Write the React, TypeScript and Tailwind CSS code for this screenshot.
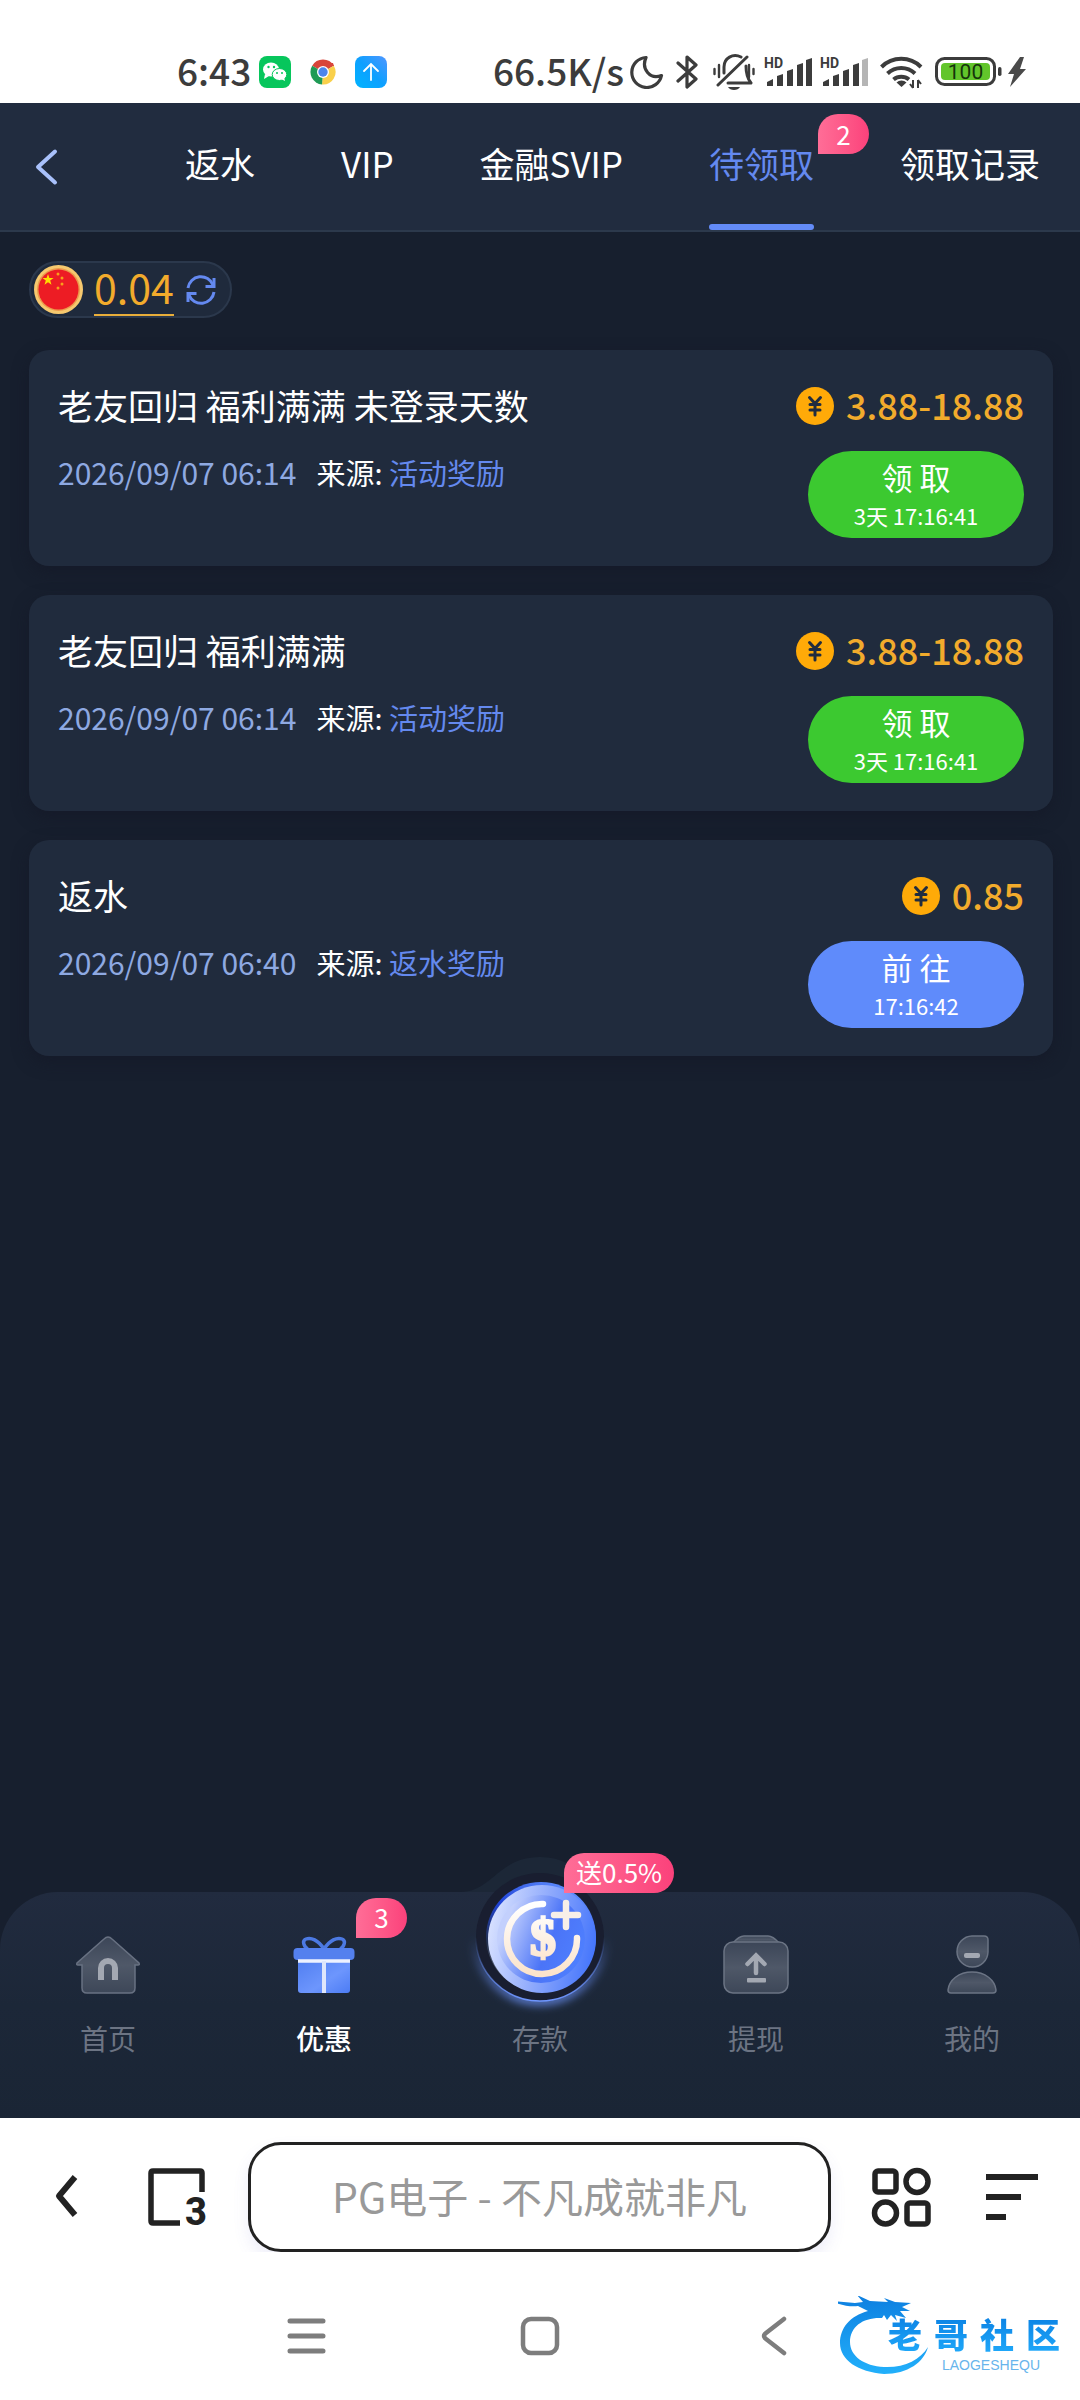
import React from "react";

interface Reward {
  title: string;
  date: string;
  source: string;
  amount: string;
  action: string;
  countdown: string;
  color: string;
}

const rewards: Reward[] = [
  {
    title: "老友回归 福利满满 未登录天数",
    date: "2026/09/07 06:14",
    source: "活动奖励",
    amount: "3.88-18.88",
    action: "领 取",
    countdown: "3天 17:16:41",
    color: "bg-[#3cc930]",
  },
  {
    title: "老友回归 福利满满",
    date: "2026/09/07 06:14",
    source: "活动奖励",
    amount: "3.88-18.88",
    action: "领 取",
    countdown: "3天 17:16:41",
    color: "bg-[#3cc930]",
  },
  {
    title: "返水",
    date: "2026/09/07 06:40",
    source: "返水奖励",
    amount: "0.85",
    action: "前 往",
    countdown: "17:16:42",
    color: "bg-[#5f8bfb]",
  },
];

const tabs = [
  { label: "返水" },
  { label: "VIP" },
  { label: "金融SVIP" },
  { label: "待领取", active: true, badge: "2" },
  { label: "领取记录" },
];

const Badge: React.FC<{ className: string; children: React.ReactNode }> = ({
  className,
  children,
}) => (
  <span
    className={`absolute flex h-10 items-center justify-center rounded-full rounded-bl-none bg-linear-to-r from-[#ff6d97] to-[#fb417b] pb-0.5 text-[26px] font-normal whitespace-nowrap text-white ${className}`}
  >
    {children}
  </span>
);

const SignalIcon: React.FC<{ weak?: boolean }> = ({ weak }) => (
  <svg width="48" height="44" viewBox="0 -7 48 44" fill="#3c3c3c">
    <text x="0" y="11" fontSize="14" fontWeight="700" fontFamily="Roboto, sans-serif">
      HD
    </text>
    <path d="M3 29v-4l6-3v7zM13 29V19l6-2v12zM23 29V14l6-2v17zM33 29V8l6-2v23z" />
    <path d="M42 29V3l6-2v28z" fill={weak ? "#b5b5b5" : "#3c3c3c"} />
  </svg>
);

const StatusBar = () => (
  <div className="flex h-[103px] items-center bg-white pt-[41px] pr-[53px] pl-[177px] text-[37px] leading-none font-medium whitespace-nowrap text-[#3c3c3c]">
    <span className="pb-1">6:43</span>
    <div className="flex items-center gap-4 pl-2">
      <svg width="32" height="32" viewBox="0 0 32 32">
        <rect width="32" height="32" rx="8" fill="#07c65c" />
        <ellipse cx="12" cy="13.500" rx="8" ry="7" fill="#fff" />
        <path d="M6 18l-1 5 5-3z" fill="#fff" />
        <circle cx="9.500" cy="11" r="1.200" fill="#07c65c" />
        <circle cx="15" cy="11" r="1.200" fill="#07c65c" />
        <ellipse cx="20.500" cy="18.500" rx="7.300" ry="6" fill="#fff" stroke="#07c65c" />
        <path d="M22 23l4 2-1-4z" fill="#fff" />
        <circle cx="18" cy="17" r="1" fill="#07c65c" />
        <circle cx="23" cy="17" r="1" fill="#07c65c" />
      </svg>
      <svg width="32" height="32" viewBox="0 0 32 32">
        <path d="M16 16L5.200 9.700A12.400 12.400 0 0 1 26.800 9.700z" fill="#d8453a" />
        <path d="M16 16L26.800 9.700A12.400 12.400 0 0 1 15 28.400z" fill="#f9d04b" />
        <path d="M16 16L15 28.400A12.400 12.400 0 0 1 5.200 9.700z" fill="#1f9a55" />
        <path d="M16 10h11l-1-3H14z" fill="#d8453a" />
        <circle cx="16" cy="16" r="6" fill="#fff" />
        <circle cx="16" cy="16" r="4.700" fill="#4b85ec" />
      </svg>
      <svg width="32" height="32" viewBox="0 0 32 32" fill="none">
        <defs>
          <linearGradient id="upload" x1="1" y1="0" x2="0" y2="1">
            <stop offset="0" stopColor="#5096ff" />
            <stop offset="0.500" stopColor="#0da0ff" />
            <stop offset="1" stopColor="#00b4ff" />
          </linearGradient>
        </defs>
        <rect width="32" height="32" rx="8" fill="url(#upload)" />
        <path d="M16 24V8M9 15l7-7 7 7" stroke="#fff" strokeWidth="1.800" strokeLinecap="round" />
      </svg>
    </div>
    <div className="ml-auto flex items-center">
      <span className="pb-1">66.5K/s</span>
      <svg className="ml-1.5" width="34" height="34" viewBox="0 0 34 34" fill="none">
        <path
          d="M16 2.500A15 15 0 1 0 31.500 20.500C20 25 11 14 16 2.500z"
          stroke="#3c3c3c"
          strokeWidth="3.200"
          strokeLinejoin="round"
        />
      </svg>
      <svg className="ml-3" width="24" height="36" viewBox="0 0 24 36" fill="none">
        <path
          d="M2 9l18 16-9 8V3l9 8L2 27"
          stroke="#3c3c3c"
          strokeWidth="3.200"
          strokeLinecap="round"
          strokeLinejoin="round"
        />
      </svg>
      <svg className="ml-3" width="44" height="36" viewBox="0 0 44 36" fill="none">
        <g stroke="#3c3c3c" strokeWidth="3" strokeLinecap="round" strokeLinejoin="round">
          <path d="M6 31L35 3M29 3C21-1 12 4 12 13v6M34 12c0 8 1 12 5 17H16" />
          <path d="M2.500 15v5M7 11v12M37 11v12M41.500 15v5" strokeWidth="2.400" />
        </g>
        <path d="M16 33h12c-2 4-10 4-12 0z" fill="#3c3c3c" />
      </svg>
      <div className="ml-2 flex gap-2">
        <SignalIcon />
        <SignalIcon weak />
      </div>
      <svg className="ml-3" width="43" height="34" viewBox="0 0 43 34" fill="none">
        <g stroke="#3c3c3c" strokeWidth="4">
          <path d="M1.500 12A28 28 0 0 1 41 12" />
          <path d="M7.500 18.500A20 20 0 0 1 35 18.500" />
          <path d="M13.500 24.500A12 12 0 0 1 29 24.500" />
        </g>
        <path d="M21.500 32l-5-4.500a7 7 0 0 1 10 0z" fill="#3c3c3c" />
        <path d="M33 25v8M30 29l3 4M38 33v-8M41 29l-3-4" stroke="#3c3c3c" strokeWidth="2" />
      </svg>
      <svg className="ml-3" width="68" height="30" viewBox="0 0 68 30">
        <rect x="1.500" y="1.500" width="58" height="26" rx="8" fill="#fff" stroke="#3c3c3c" strokeWidth="3" />
        <rect x="6" y="6" width="49" height="17" rx="4" fill="#62c52b" />
        <rect x="63" y="10" width="3.500" height="9" rx="1.700" fill="#3c3c3c" />
        <text
          x="30.500"
          y="22"
          textAnchor="middle"
          fontSize="21"
          fontWeight="400"
          fontFamily="Roboto, sans-serif"
          fill="#15350a"
        >
          100
        </text>
      </svg>
      <svg className="ml-1" width="20" height="30" viewBox="0 0 20 30">
        <path d="M13 0L1 17h6L3 30l16-18h-6l4-12z" fill="#4a4a4a" />
      </svg>
    </div>
  </div>
);

const Header = () => (
  <header className="flex h-[129px] items-stretch border-b-2 border-[#2c394c] bg-[#212c3f]">
    <button aria-label="返回" className="pr-6 pl-[34px]">
      <svg width="26" height="38" viewBox="0 0 26 38" fill="none">
        <path
          d="M21 3.500L4 19l17 15.500"
          stroke="#a9c1fb"
          strokeWidth="4"
          strokeLinecap="round"
          strokeLinejoin="round"
        />
      </svg>
    </button>
    <nav className="flex flex-1 items-stretch justify-between pr-10 pl-[101px]">
      {tabs.map((tab) => (
        <a
          key={tab.label}
          href="#"
          className={`relative flex items-center pb-1.5 text-[35px] whitespace-nowrap ${
            tab.active ? "text-[#6489f0]" : "text-white"
          }`}
        >
          {tab.label}
          {tab.active && (
            <span className="absolute inset-x-0 bottom-0 h-1.5 rounded-full bg-[#638bf7]" />
          )}
          {tab.badge && <Badge className="top-[11px] left-full ml-1 w-[51px]">{tab.badge}</Badge>}
        </a>
      ))}
    </nav>
  </header>
);

const Balance = () => (
  <div className="flex h-[57px] w-fit items-center rounded-full border-2 border-[#2b384c] bg-[#1f2a3c] pr-3.5 pl-[3px]">
    <svg width="49" height="49" viewBox="0 0 49 49">
      <circle cx="24.500" cy="24.500" r="24.500" fill="#f6c96f" />
      <circle cx="24.500" cy="24.500" r="21.500" fill="#ec9a4c" />
      <circle cx="24.500" cy="24.500" r="20" fill="#ed1c24" />
      <path
        d="M14 9l1.400 4h4.200l-3.400 2.600 1.300 4.100-3.500-2.500-3.500 2.500 1.300-4.100L8.400 13h4.200z"
        fill="#ffde00"
      />
      <g fill="#f9a01b">
        <circle cx="24" cy="9" r="1.500" />
        <circle cx="28" cy="13" r="1.500" />
        <circle cx="28" cy="19" r="1.500" />
        <circle cx="24" cy="23" r="1.500" />
      </g>
    </svg>
    <span className="ml-[11px] border-b-2 border-[#e9ae3a] pb-[5px] text-[41px] leading-[46px] text-[#f2ab2c]">
      0.04
    </span>
    <button aria-label="刷新" className="ml-3">
      <svg width="30" height="30" viewBox="0 0 30 30" fill="none" stroke="#6489f0" strokeWidth="3">
        <path d="M2 13A13 13 0 0 1 27 10M28 17A13 13 0 0 1 3 20" />
        <path d="M28 3v8.500h-8.500M2 27v-8.500h8.500" />
      </svg>
    </button>
  </div>
);

const CoinIcon = () => (
  <svg width="38" height="38" viewBox="0 0 38 38">
    <circle cx="19" cy="19" r="19" fill="#ffaa08" />
    <path
      d="M13.500 10.500L19 16.500l5.500-6M14 17.500h10M14 23h10M19 17v11"
      fill="none"
      stroke="#212c3f"
      strokeWidth="3"
      strokeLinecap="round"
    />
  </svg>
);

const RewardCard: React.FC<{ reward: Reward }> = ({ reward }) => (
  <li className="flex justify-between rounded-[20px] bg-[#202b3d] px-[29px] pt-[30px] pb-7 shadow-[0_6px_16px_rgba(20,24,38,0.6)]">
    <div>
      <h2 className="text-[35px] leading-[50px] font-normal text-white">{reward.title}</h2>
      <p className="mt-[22px] flex items-baseline gap-5 leading-10">
        <span className="text-[30px] text-[#8ea9e2]">{reward.date}</span>
        <span className="text-[29px] text-white">
          来源: <span className="text-[#6489ee]">{reward.source}</span>
        </span>
      </p>
    </div>
    <div className="flex flex-col items-end">
      <div className="flex items-center gap-3 leading-[52px] font-medium text-[#f2ab2c]">
        <CoinIcon />
        <span className="pb-[3px] text-[36px] leading-[49px]">{reward.amount}</span>
      </div>
      <button
        className={`mt-[19px] flex h-[87px] w-[216px] flex-col items-center justify-center rounded-full text-white ${reward.color}`}
      >
        <span className="text-[31px] leading-10">{reward.action}</span>
        <span className="text-[22px] leading-9">{reward.countdown}</span>
      </button>
    </div>
  </li>
);

const HomeIcon = () => (
  <svg width="66" height="58" viewBox="0 0 66 58">
    <defs>
      <linearGradient id="grey" x1="0" y1="0" x2="0" y2="1">
        <stop offset="0" stopColor="#3c4658" />
        <stop offset="0.500" stopColor="#4f5868" />
        <stop offset="1" stopColor="#3d4758" />
      </linearGradient>
    </defs>
    <path
      d="M33 1q2 0 4 2l27 24q1 2-1 2h-3v23q0 5-5 5H12q-5 0-5-5V29H3q-2 0-1-2L29 3q2-2 4-2z"
      fill="url(#grey)"
      stroke="#687182"
      strokeWidth="1.500"
    />
    <path d="M26 44V32a7 7 0 0 1 14 0v12" fill="none" stroke="#a3a8b2" strokeWidth="6" />
  </svg>
);

const GiftIcon = () => (
  <svg width="62" height="58" viewBox="0 0 62 58">
    <defs>
      <linearGradient id="gift" x1="0" y1="0" x2="1" y2="1">
        <stop offset="0" stopColor="#4f7df0" />
        <stop offset="0.600" stopColor="#6d96fd" />
        <stop offset="1" stopColor="#4c7cf5" />
      </linearGradient>
    </defs>
    <path
      d="M31 13C25 4 18 1 13 3s-1 9 2 10M31 13C37 4 44 1 49 3s1 9-2 10"
      fill="none"
      stroke="#4c79e2"
      strokeWidth="3.500"
    />
    <rect x="5" y="22" width="52" height="35" rx="3" fill="url(#gift)" />
    <rect x="0.500" y="12" width="61" height="12" rx="4" fill="#5480ee" />
    <path d="M5 25h52" stroke="#eef2ff" strokeWidth="3.500" />
    <path d="M31 25v32" stroke="#dfe6fb" strokeWidth="4" />
  </svg>
);

const WithdrawIcon = () => (
  <svg width="66" height="60" viewBox="0 0 66 60">
    <g fill="url(#grey)" stroke="#6b7484" strokeWidth="1.500">
      <path d="M10 8q6-7 11-7h24q5 0 11 7z" />
      <rect x="1" y="7" width="64" height="51" rx="9" />
    </g>
    <path
      d="M33 38V22M24.500 29l8.500-8.500 8.500 8.500"
      fill="none"
      stroke="#a3a8b2"
      strokeWidth="4.500"
      strokeLinecap="round"
    />
    <rect x="24" y="43" width="19" height="4.500" rx="1" fill="#a3a8b2" />
  </svg>
);

const ProfileIcon = () => (
  <svg width="50" height="60" viewBox="0 0 50 60">
    <g fill="url(#grey)" stroke="#6b7484" strokeWidth="1.500">
      <path d="M25 1h12q4 0 4 4v12a15.500 15.500 0 1 1-16-16z" />
      <path d="M25 37c13 0 23 8 24 18q0 3-3 3H4q-3 0-3-3C2 45 12 37 25 37z" />
    </g>
    <rect x="17" y="18" width="16" height="5" rx="2" fill="#a3a8b2" />
  </svg>
);

const DepositIcon = () => (
  <svg
    className="absolute top-1/2 left-1/2 -mt-[108px] -ml-20"
    width="160"
    height="170"
    viewBox="0 0 160 170"
  >
    <defs>
      <linearGradient id="rim" x1="0" y1="1" x2="0.700" y2="0">
        <stop offset="0" stopColor="#9fa3ab" />
        <stop offset="0.300" stopColor="#23304e" />
        <stop offset="0.600" stopColor="#1f43d8" />
        <stop offset="1" stopColor="#5f8dff" />
      </linearGradient>
      <linearGradient id="face" x1="0" y1="0.400" x2="1" y2="0.600">
        <stop offset="0" stopColor="#d8e1ff" />
        <stop offset="0.500" stopColor="#8ea9fc" />
        <stop offset="1" stopColor="#4475fc" />
      </linearGradient>
      <linearGradient id="disc" x1="0" y1="0.300" x2="1" y2="0.700">
        <stop offset="0.100" stopColor="#c3d0fd" />
        <stop offset="0.600" stopColor="#4b74f7" />
        <stop offset="1" stopColor="#4f80ff" />
      </linearGradient>
      <linearGradient id="cream" x1="0" y1="0" x2="0" y2="1">
        <stop offset="0" stopColor="#ffffff" />
        <stop offset="1" stopColor="#fbe3cb" />
      </linearGradient>
      <linearGradient id="halo" x1="0" y1="0" x2="0" y2="1">
        <stop offset="0.500" stopColor="#5f87ef" stopOpacity="0" />
        <stop offset="1" stopColor="#6f96ff" />
      </linearGradient>
      <filter id="glow" x="-20%" y="-20%" width="140%" height="140%">
        <feGaussianBlur stdDeviation="5" />
      </filter>
    </defs>
    <path d="M0 35C32 35 38 0 80 0s48 35 80 35z" fill="#1c2737" />
    <circle cx="80" cy="80" r="64" fill="none" stroke="url(#halo)" strokeWidth="7" filter="url(#glow)" />
    <circle cx="80" cy="80" r="64" fill="#191e30" stroke="url(#halo)" strokeWidth="1.500" />
    <circle cx="81" cy="80" r="55" fill="url(#rim)" />
    <circle cx="82" cy="82" r="54" fill="url(#face)" />
    <circle cx="81" cy="82" r="44" fill="url(#disc)" />
    <path
      d="M83 47A35 35 0 1 0 117 81"
      fill="none"
      stroke="url(#cream)"
      strokeWidth="6.500"
      strokeLinecap="round"
    />
    <path d="M94 58h24M106 46v24" stroke="#f8efe8" strokeWidth="6.500" strokeLinecap="round" />
    <text
      x="83"
      y="98"
      textAnchor="middle"
      fontSize="52"
      fontWeight="700"
      fontFamily="'Liberation Serif', serif"
      fill="url(#cream)"
      stroke="url(#cream)"
      strokeWidth="2.500"
    >
      $
    </text>
  </svg>
);

const navItems = [
  { label: "首页", icon: <HomeIcon /> },
  { label: "优惠", icon: <GiftIcon />, active: true, badge: "3", badgeClass: "-top-[38px] left-full ml-px w-[51px]" },
  { label: "存款", icon: <DepositIcon />, badge: "送0.5%", badgeClass: "-top-[83px] left-1/2 ml-6 w-[110px]" },
  { label: "提现", icon: <WithdrawIcon /> },
  { label: "我的", icon: <ProfileIcon /> },
];

const BottomNav = () => (
  <nav className="grid grid-cols-5 rounded-t-[58px] bg-linear-to-b from-[#212b3f] via-[#1c2738] to-[#1a2535] pt-11 pb-[60px]">
    {navItems.map((item) => (
      <a
        key={item.label}
        href="#"
        className={`flex flex-col items-center text-[28px] leading-10 ${
          item.active ? "font-medium text-white" : "text-[#6c7483]"
        }`}
      >
        <span className="relative flex h-[58px] items-center justify-center">
          {item.icon}
          {item.badge && <Badge className={item.badgeClass}>{item.badge}</Badge>}
        </span>
        <span className="mt-6">{item.label}</span>
      </a>
    ))}
  </nav>
);

const BrowserBar = () => (
  <div className="flex items-center bg-white pt-6 pr-[41px] pl-[52px]">
    <button aria-label="后退">
      <svg width="28" height="44" viewBox="0 0 28 44" fill="none">
        <path d="M23 2L7 21l16 19" stroke="#222" strokeWidth="6" strokeLinejoin="round" />
      </svg>
    </button>
    <button aria-label="标签页" className="ml-[67px]">
      <svg width="64" height="80" viewBox="0 -10 64 80">
        <path
          d="M55 25V6q0-2-2-2H6q-2 0-2 2v48q0 2 2 2h27"
          fill="none"
          stroke="#222"
          strokeWidth="5.500"
        />
        <text x="49" y="58" textAnchor="middle" fontSize="38" fontWeight="800" fontFamily="Roboto, sans-serif" fill="#222">
          3
        </text>
      </svg>
    </button>
    <input
      aria-label="搜索"
      placeholder="PG电子 - 不凡成就非凡"
      className="mr-10 ml-[37px] h-[110px] min-w-0 flex-1 rounded-[33px] border-3 border-[#222] bg-white pb-1 text-center text-[41px] shadow-[0_8px_16px_rgba(90,90,200,0.10)] outline-none placeholder:text-[#999]"
    />
    <button aria-label="应用">
      <svg width="60" height="60" viewBox="0 0 60 60" fill="none" stroke="#222" strokeWidth="5.500">
        <rect x="4" y="4" width="21" height="21" rx="3" />
        <circle cx="46" cy="14.500" r="11" />
        <circle cx="14.500" cy="46" r="11" />
        <rect x="36" y="36" width="21" height="21" rx="3" />
      </svg>
    </button>
    <button aria-label="菜单" className="ml-[54px]">
      <svg width="54" height="60" viewBox="0 0 54 60" fill="#222">
        <path d="M1 7h52v6H1zM1 27h35v6H1zM1 47h20v6H1z" />
      </svg>
    </button>
  </div>
);

const CommunityLogo = () => (
  <div className="relative ml-auto flex h-20 w-[222px] flex-col items-end justify-end">
    <svg className="absolute top-0 left-0" width="92" height="80" viewBox="0 0 92 80">
      <defs>
        <linearGradient id="dragon" x1="0" y1="0" x2="0" y2="1">
          <stop offset="0" stopColor="#0d7fe0" />
          <stop offset="1" stopColor="#22b0fb" />
        </linearGradient>
      </defs>
      <path
        d="M30 15C12 20 2 32 2 47c0 17 18 29 44 31 24 0 40-12 44-27-8 13-24 21-44 20-20-1-34-11-34-25C12 30 26 21 44 22l2-3 3 5 4-5 6 6-2-6 11 3-6-7h10l-8-4 9-4-16-1-11-4 4 4-18-1-13-6 6 7-8 1-24-2c9 4 19 6 27 5z"
        fill="url(#dragon)"
      />
    </svg>
    <div className="relative flex gap-3 bg-linear-to-b from-[#0b80e3] to-[#20a9fa] bg-clip-text text-[34px] leading-10 font-black text-transparent">
      <span>老</span>
      <span>哥</span>
      <span>社</span>
      <span>区</span>
    </div>
    <span className="relative mt-1 mr-5 pb-1 font-['Liberation_Sans',sans-serif] text-[14px] leading-[14px] text-[#68b5ec]">
      LAOGESHEQU
    </span>
  </div>
);

const SystemBar = () => (
  <div className="flex items-center bg-white pt-[44px] pr-5 pb-6 pl-[286px]">
    <button aria-label="最近任务">
      <svg width="40" height="40" viewBox="0 0 40 40" stroke="#7d7d7d" strokeWidth="5" strokeLinecap="round">
        <path d="M4 5h33M4 20h33M4 35h33" />
      </svg>
    </button>
    <button aria-label="主屏幕" className="ml-[194px]">
      <svg width="40" height="40" viewBox="0 0 40 40" fill="none" stroke="#7d7d7d" strokeWidth="4.500">
        <rect x="3" y="3" width="34" height="34" rx="8" />
      </svg>
    </button>
    <button aria-label="返回上级" className="ml-[198px]">
      <svg width="32" height="40" viewBox="0 0 32 40" fill="none">
        <path
          d="M26 3L8 17q-4 3 0 6l18 14"
          stroke="#7d7d7d"
          strokeWidth="4.500"
          strokeLinecap="round"
        />
      </svg>
    </button>
    <CommunityLogo />
  </div>
);

export default function App() {
  return (
    <div className="flex min-h-screen flex-col bg-[#171f2e] font-['Noto_Sans_CJK_SC',sans-serif]">
      <StatusBar />
      <Header />
      <main className="flex-1 pt-[29px] pr-[27px] pb-[60px] pl-[29px]">
        <Balance />
        <ul className="mt-8 flex flex-col gap-[29px]">
          {rewards.map((reward, index) => (
            <RewardCard key={index} reward={reward} />
          ))}
        </ul>
      </main>
      <BottomNav />
      <BrowserBar />
      <SystemBar />
    </div>
  );
}
